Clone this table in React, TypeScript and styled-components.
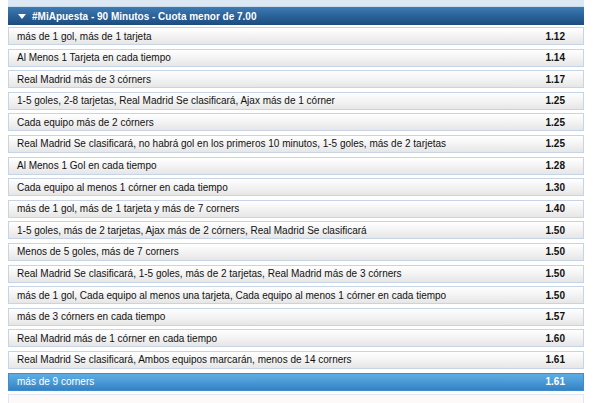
import React from 'react';
import styled, { createGlobalStyle } from 'styled-components';

const GlobalStyle = createGlobalStyle`
  html, body {
    margin: 0;
    padding: 0;
    background: #ffffff;
    font-family: "Liberation Sans", Arial, sans-serif;
  }
`;

const Page = styled.div`
  width: 600px;
  height: 403px;
  overflow: hidden;
  padding: 0 16px 0 8px;
  box-sizing: border-box;
`;

const TopBand = styled.div`
  height: 6px;
  background: #dce9f4;
  border-bottom: 1px solid #c9dbea;
`;

const Header = styled.div`
  height: 18px;
  display: flex;
  align-items: center;
  gap: 6px;
  padding-left: 10px;
  background: linear-gradient(to bottom, #3d7bb3 0%, #2a6298 50%, #1d4c7e 100%);
  color: #ffffff;
  font-size: 10px;
  font-weight: bold;
`;

const Arrow = styled.span`
  width: 0;
  height: 0;
  border-left: 4px solid transparent;
  border-right: 4px solid transparent;
  border-top: 5px solid #ffffff;
`;

const List = styled.div`
  display: flex;
  flex-direction: column;
  gap: 3.6px;
  padding-top: 2px;
`;

const Row = styled.div<{ $active?: boolean }>`
  height: 16px;
  flex-shrink: 0;
  display: flex;
  align-items: center;
  justify-content: space-between;
  padding: 0 18px 0 8px;
  border: 1px solid ${p => (p.$active ? '#3f8ccb' : '#c6d4e6')};
  background: ${p =>
    p.$active
      ? 'linear-gradient(to bottom, #5eaee4 0%, #4a9ad6 50%, #3681c3 100%)'
      : 'linear-gradient(to bottom, #ffffff 0%, #f3f3f3 50%, #e6e6e6 100%)'};
  color: ${p => (p.$active ? '#ffffff' : '#111111')};
  font-size: 10px;
`;

const Label = styled.span`
  white-space: nowrap;
`;

const Odds = styled.span`
  font-weight: bold;
`;

const Ghost = styled.div`
  height: 16px;
  flex-shrink: 0;
  border: 1px solid #e3e6f0;
  background: #fdf9f9;
`;

const bets: [string, string][] = [
  ['más de 1 gol, más de 1 tarjeta', '1.12'],
  ['Al Menos 1 Tarjeta en cada tiempo', '1.14'],
  ['Real Madrid más de 3 córners', '1.17'],
  ['1-5 goles, 2-8 tarjetas, Real Madrid Se clasificará, Ajax más de 1 córner', '1.25'],
  ['Cada equipo más de 2 córners', '1.25'],
  ['Real Madrid Se clasificará, no habrá gol en los primeros 10 minutos, 1-5 goles, más de 2 tarjetas', '1.25'],
  ['Al Menos 1 Gol en cada tiempo', '1.28'],
  ['Cada equipo al menos 1 córner en cada tiempo', '1.30'],
  ['más de 1 gol, más de 1 tarjeta y más de 7 corners', '1.40'],
  ['1-5 goles, más de 2 tarjetas, Ajax más de 2 córners, Real Madrid Se clasificará', '1.50'],
  ['Menos de 5 goles, más de 7 corners', '1.50'],
  ['Real Madrid Se clasificará, 1-5 goles, más de 2 tarjetas, Real Madrid más de 3 córners', '1.50'],
  ['más de 1 gol, Cada equipo al menos una tarjeta, Cada equipo al menos 1 córner en cada tiempo', '1.50'],
  ['más de 3 córners en cada tiempo', '1.57'],
  ['Real Madrid más de 1 córner en cada tiempo', '1.60'],
  ['Real Madrid Se clasificará, Ambos equipos marcarán, menos de 14 corners', '1.61'],
  ['más de 9 corners', '1.61'],
];

const App: React.FC = () => {
  return (
    <Page>
      <GlobalStyle />
      <TopBand />
      <Header>
        <Arrow />
        #MiApuesta - 90 Minutos - Cuota menor de 7.00
      </Header>
      <List>
        {bets.map(([label, odds], i) => (
          <Row key={i} $active={i === bets.length - 1}>
            <Label>{label}</Label>
            <Odds>{odds}</Odds>
          </Row>
        ))}
        <Ghost />
      </List>
    </Page>
  );
};

export default App;
